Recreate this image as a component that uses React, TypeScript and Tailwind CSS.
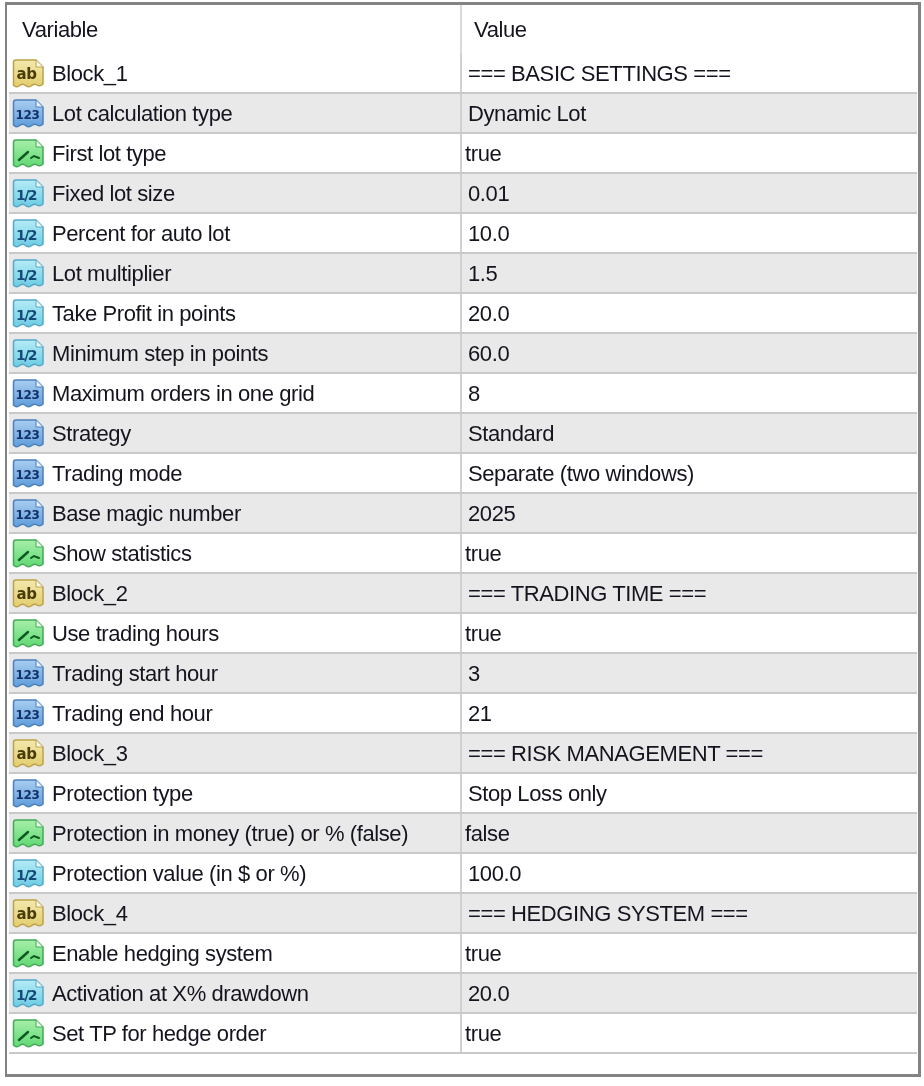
const rows: [string, string, string][] = [
  ["ab", "Block_1", "=== BASIC SETTINGS ==="],
  ["int", "Lot calculation type", "Dynamic Lot"],
  ["bool", "First lot type", "true"],
  ["dbl", "Fixed lot size", "0.01"],
  ["dbl", "Percent for auto lot", "10.0"],
  ["dbl", "Lot multiplier", "1.5"],
  ["dbl", "Take Profit in points", "20.0"],
  ["dbl", "Minimum step in points", "60.0"],
  ["int", "Maximum orders in one grid", "8"],
  ["int", "Strategy", "Standard"],
  ["int", "Trading mode", "Separate (two windows)"],
  ["int", "Base magic number", "2025"],
  ["bool", "Show statistics", "true"],
  ["ab", "Block_2", "=== TRADING TIME ==="],
  ["bool", "Use trading hours", "true"],
  ["int", "Trading start hour", "3"],
  ["int", "Trading end hour", "21"],
  ["ab", "Block_3", "=== RISK MANAGEMENT ==="],
  ["int", "Protection type", "Stop Loss only"],
  ["bool", "Protection in money (true) or % (false)", "false"],
  ["dbl", "Protection value (in $ or %)", "100.0"],
  ["ab", "Block_4", "=== HEDGING SYSTEM ==="],
  ["bool", "Enable hedging system", "true"],
  ["dbl", "Activation at X% drawdown", "20.0"],
  ["bool", "Set TP for hedge order", "true"],
];

const palette: Record<string, { top: string; bottom: string; edge: string; ink: string }> = {
  ab: { top: "#f3e9ad", bottom: "#e2cd6e", edge: "#bda24a", ink: "#4a3c08" },
  int: { top: "#a9cdf0", bottom: "#5f9ddb", edge: "#4c80ba", ink: "#12306b" },
  bool: { top: "#a6efaa", bottom: "#62d873", edge: "#46a95a", ink: "#0c5a22" },
  dbl: { top: "#b6ecf6", bottom: "#6ccbe4", edge: "#55a9c6", ink: "#134a78" },
};

function TypeIcon({ kind }: { kind: string }) {
  const c = palette[kind];
  const gid = `grad-${kind}`;
  return (
    <svg width="33" height="32" viewBox="0 0 33 32" className="shrink-0 mt-px">
      <defs>
        <linearGradient id={gid} x1="0" y1="0" x2="0" y2="1">
          <stop offset="0" stopColor={c.top} />
          <stop offset="1" stopColor={c.bottom} />
        </linearGradient>
      </defs>
      <path
        d="M4 2 H24 L31 9 V26 Q28 29 25 27 Q22 25 19 28 Q16 30 13 27 Q10 25 7 28 Q4 30 1.5 27 V4.5 Q1.5 2 4 2 Z"
        fill={`url(#${gid})`}
        stroke={c.edge}
        strokeWidth="1.5"
      />
      <path d="M24 2 V9 H31" fill="#ffffff" fillOpacity="0.75" stroke={c.edge} strokeWidth="1" />
      {kind === "ab" && (
        <text x="14.5" y="21" textAnchor="middle" fontFamily="'DejaVu Sans', sans-serif" fontSize="15" fontWeight="700" letterSpacing="-0.5" fill={c.ink}>
          ab
        </text>
      )}
      {kind === "int" && (
        <text x="15.5" y="21" textAnchor="middle" fontFamily="'DejaVu Sans', sans-serif" fontSize="12" fontWeight="700" fill={c.ink}>
          123
        </text>
      )}
      {kind === "dbl" && (
        <text x="14" y="21.5" textAnchor="middle" fontFamily="'DejaVu Sans', sans-serif" fontSize="14" fontWeight="700" letterSpacing="-1.5" fill={c.ink}>
          1/2
        </text>
      )}
      {kind === "bool" && (
        <g stroke={c.ink} fill="none" strokeLinecap="round">
          <path d="M7 22 L16 14" strokeWidth="2.4" />
          <path d="M19 20 L22 18 L27 20" strokeWidth="2" />
        </g>
      )}
    </svg>
  );
}

export default function App() {
  return (
    <div
      className="w-[924px] h-[1086px] bg-white pt-[2px] pl-[5px] text-[#14141f] text-[22px] tracking-[-0.4px] blur-[0.4px]"
      style={{ fontFamily: "'Liberation Sans', Arial, sans-serif" }}
    >
      <div className="w-[916px] h-[1075px] border-t-[3px] border-l-2 border-r-[3px] border-b-[3px] border-[#838383] pl-[2px] pr-[1px]">
        <div className="flex h-[49px] items-center">
          <div className="w-[453px] h-full pl-[13px] flex items-center border-r-2 border-[#d9d9d9]">Variable</div>
          <div className="pl-[12px]">Value</div>
        </div>
        {rows.map(([kind, name, value], i) => (
          <div
            key={name}
            className={`flex h-[40px] border-b-2 border-[#c9c9c9] ${i % 2 === 1 ? "bg-[#e9e9e9]" : "bg-white"}`}
          >
            <div className="w-[453px] flex items-center gap-[7px] pl-[3px] border-r-2 border-[#d0d0d0] whitespace-nowrap">
              <TypeIcon kind={kind} />
              <span>{name}</span>
            </div>
            <div className={`flex items-center whitespace-nowrap ${kind === "bool" ? "pl-[3px]" : "pl-[6px]"}`}>{value}</div>
          </div>
        ))}
      </div>
    </div>
  );
}
